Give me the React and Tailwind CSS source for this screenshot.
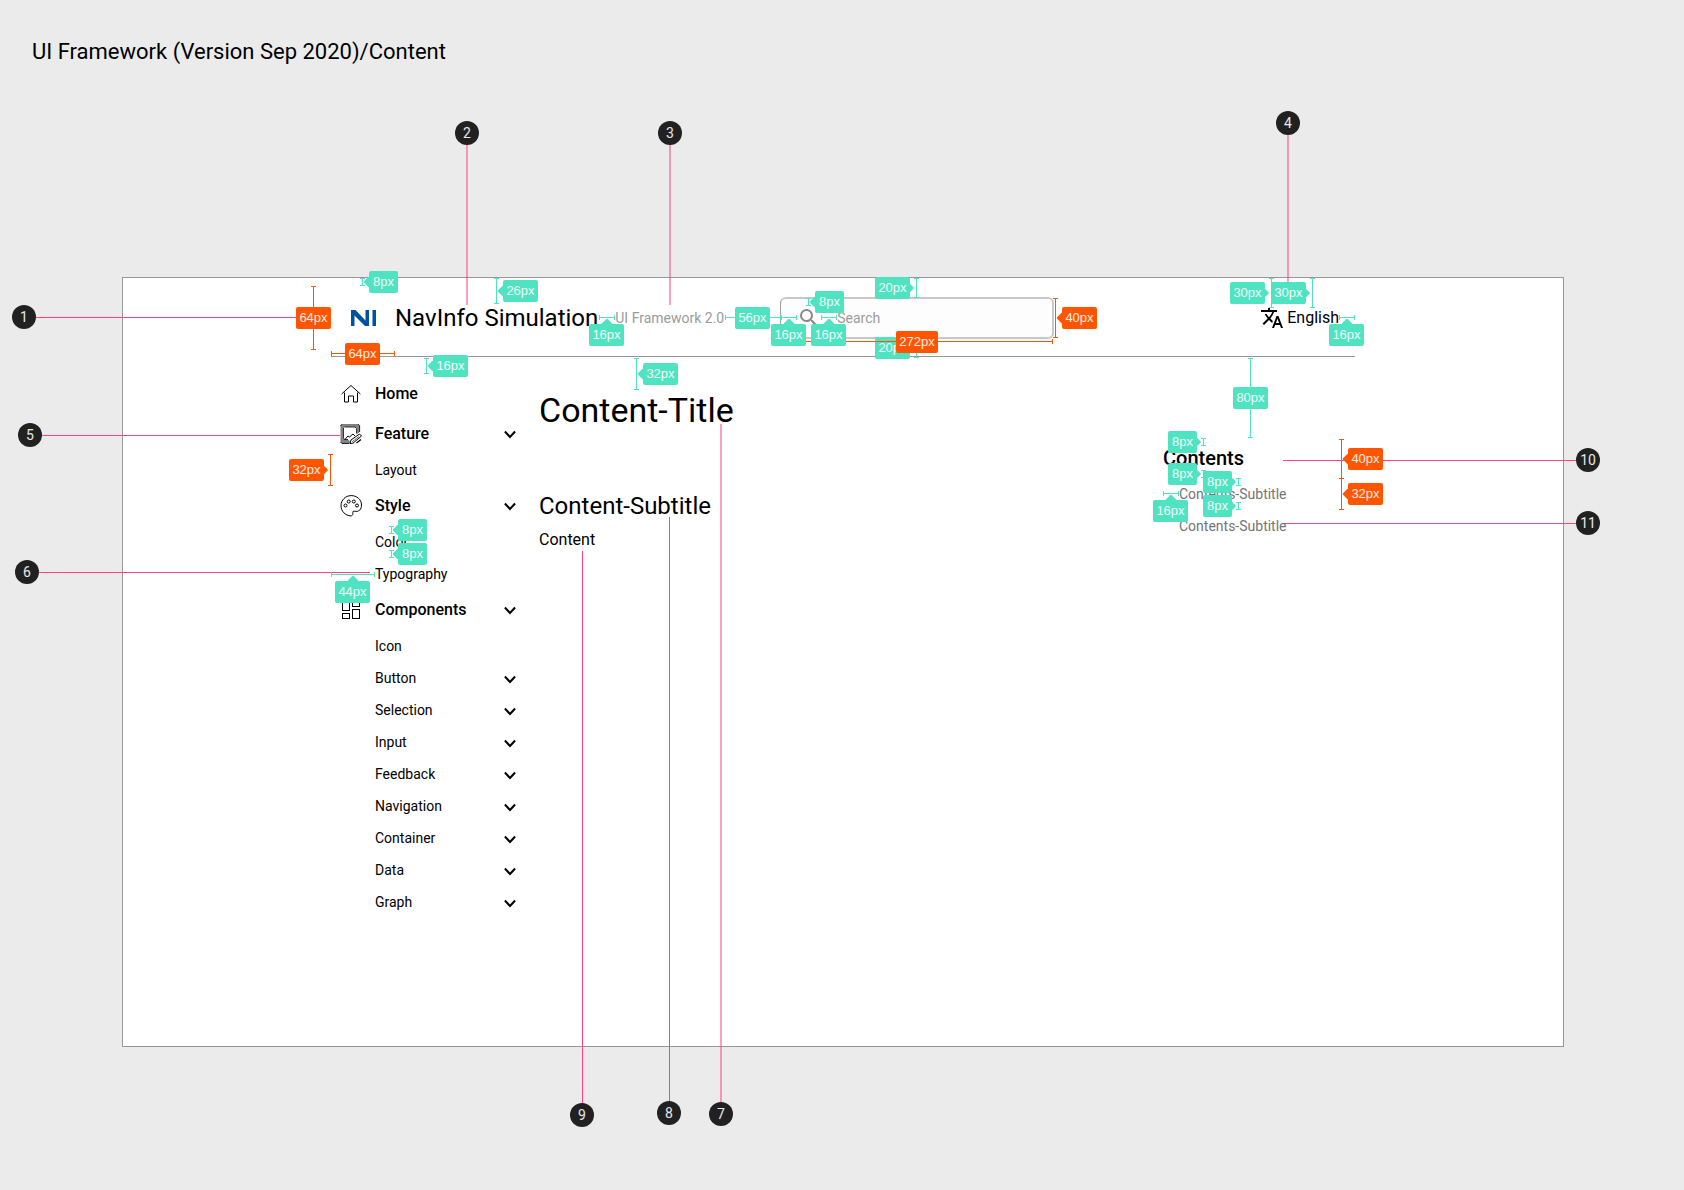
import React from "react";
import { MdSearch, MdTranslate } from "react-icons/md";

const TEAL = "#50e3c2";
const ORANGE = "#ff5500";

/* ---------- icons ---------- */

function HomeIcon() {
  return (
    <svg viewBox="0 0 24 24" className="size-6 shrink-0" fill="none" stroke="#000" strokeWidth="1" aria-hidden="true">
      <path d="M2.6 12 12 3.500l9.400 8.500" />
      <path d="M5.500 10.500v9.500h4v-6h5v6h4v-9.500" />
    </svg>
  );
}

function FeatureIcon() {
  return (
    <svg viewBox="0 0 24 24" className="size-6 shrink-0" fill="none" aria-hidden="true">
      <path
        d="M3 2h16l1.600 1.400V10L18 12V6.500L16.500 5h-11L4 6.500V16.500L6 18h4l1.500 3.500H3L1.500 20V3.500z"
        fill="#808080"
      />
      <path d="M5.500 5h10.500l1.500 1.500v5M4.500 6v10.500l1.500 1h3" stroke="#333" strokeWidth="1" />
      <path d="M1.500 20 3 21.500h7M1.500 4 3 2.200M19 2.200l1.600 1.300V10" stroke="#222" strokeWidth="1" />
      <path d="m5.500 18 3.500-4 1.500 1 3.500-3 2 2" stroke="#000" strokeWidth="1" />
      <path d="m11 21.500 1-3.500 8.500-6 2 2-8.500 7.200z" fill="#fff" stroke="#000" strokeWidth="1" />
      <path d="m17.500 21 4.500-3.500" stroke="#000" strokeWidth="1.200" />
      <path d="m13.500 19.500 6.500-5" stroke="#000" strokeWidth="1" strokeDasharray="1.500 1" />
    </svg>
  );
}

function StyleIcon() {
  return (
    <svg viewBox="0 0.5 24 24" className="size-6 shrink-0" fill="none" stroke="#000" strokeWidth="1" aria-hidden="true">
      <path d="M14.200 17.800c-.8.5-.2 1.400-.3 2.300-.1 1.300-.9 2.300-2 2.300C6.300 22.200 2 17.700 2 12.200 2 6.500 6.600 2.100 12.200 2.100S22.500 6 22.500 11.500c0 4.600-2.600 6.400-5.300 6.400-1.200 0-2.200-.5-3-.1z" />
      <circle cx="6.500" cy="12" r="1.500" />
      <circle cx="9.700" cy="8" r="1.500" />
      <circle cx="14.800" cy="8" r="1.500" />
      <circle cx="18" cy="12" r="1.500" />
    </svg>
  );
}

function ComponentsIcon() {
  return (
    <svg viewBox="0 0 24 24" className="size-6 shrink-0" fill="none" stroke="#000" strokeWidth="1" aria-hidden="true">
      <rect x="3.500" y="3.500" width="7" height="9" />
      <rect x="13.500" y="3.500" width="7" height="5" />
      <rect x="3.500" y="15.500" width="7" height="5" />
      <rect x="13.500" y="11.500" width="7" height="9" />
    </svg>
  );
}

function Chevron({ raised }) {
  return (
    <svg
      viewBox={raised ? "0 1 24 24" : "0 0 24 24"}
      className="size-6 shrink-0"
      fill="none"
      stroke="#000"
      strokeWidth="2"
      aria-hidden="true"
    >
      <path d="m6.900 10.500 5.100 5.500 5.100-5.500" />
    </svg>
  );
}

function Logo() {
  return (
    <svg viewBox="0 0 64 64" className="size-16 shrink-0" role="img" aria-label="NavInfo">
      <path d="M20 40V24h4.500l10 10.500V24H38v16h-4l-10.500-10.500V40zM41.500 24h3.500v16h-3.500z" fill="#0052a0" />
    </svg>
  );
}

/* ---------- page ---------- */

const MENU = [
  { label: "Home", icon: HomeIcon },
  { label: "Feature", icon: FeatureIcon, open: true },
  { label: "Layout" },
  { label: "Style", icon: StyleIcon, open: true },
  { label: "Color" },
  { label: "Typography" },
  { label: "Components", icon: ComponentsIcon, open: true },
  { label: "Icon" },
  { label: "Button", open: false },
  { label: "Selection", open: false },
  { label: "Input", open: false },
  { label: "Feedback", open: false },
  { label: "Navigation", open: false },
  { label: "Container", open: false },
  { label: "Data", open: false },
  { label: "Graph", open: false },
];

function MenuItem({ label, icon: Icon, open }) {
  const row = Icon
    ? "flex h-10 w-full items-center pl-2 pr-[17px] text-base font-medium text-left"
    : "flex h-8 w-full items-center pl-2 pr-[17px] text-sm text-left";
  const inner = (
    <>
      {Icon ? <Icon /> : <span className="w-6" />}
      <span className="ml-3 grow">{label}</span>
    </>
  );
  if (open === undefined) {
    return (
      <a href="#" className={row}>
        {inner}
      </a>
    );
  }
  return (
    <button type="button" aria-expanded={open} className={row}>
      {inner}
      <Chevron raised={Boolean(Icon)} />
    </button>
  );
}

function Header() {
  return (
    <header className="flex h-[79px] items-center border-b border-[#979797] pt-0.5 pr-4">
      <Logo />
      <span className="text-2xl whitespace-nowrap">NavInfo Simulation</span>
      <span className="ml-[17px] text-sm whitespace-nowrap text-[#9b9b9b]">UI Framework 2.0</span>
      <label className="ml-14 flex h-[42px] w-[274px] shrink-0 items-center rounded-md border-2 border-l border-[#c8c8c8] border-l-[#a0a0a0] bg-[#fdfdfd] pl-4">
        <MdSearch className="size-6 shrink-0 text-[#888888]" aria-hidden="true" />
        <input
          type="search"
          aria-label="Search"
          placeholder="Search"
          className="ml-4 w-full min-w-0 bg-transparent text-sm outline-none placeholder:text-[#9b9b9b]"
        />
      </label>
      <button type="button" className="ml-auto flex items-center gap-[3px] text-base">
        <MdTranslate className="size-6" aria-hidden="true" />
        English
      </button>
    </header>
  );
}

/* ---------- measurements ---------- */

/* v: [x, y1, y2] vertical span; h: [y, x1, x2] horizontal span */
const MEASURES = [
  { t: "64px", x: 296, y: 307, v: [313, 286, 350], c: ORANGE },
  { t: "8px", x: 369, y: 271, v: [362, 278, 286], a: "left" },
  { t: "26px", x: 503, y: 280, v: [496, 278, 304], a: "left" },
  { t: "64px", x: 345, y: 343, h: [353, 331, 395], c: ORANGE },
  { t: "16px", x: 433, y: 355, v: [426, 358, 374], a: "left" },
  { t: "32px", x: 289, y: 459, v: [330, 454, 486], a: "right", c: ORANGE },
  { t: "16px", x: 589, y: 324, h: [317, 599, 615], a: "up" },
  { t: "56px", x: 735, y: 307, h: [317, 725, 781] },
  { t: "20px", x: 875, y: 277, v: [916, 278, 298], a: "right" },
  { t: "20px", x: 875, y: 337, v: [916, 338, 358], a: "right" },
  { t: "272px", x: 896, y: 331, h: [341, 781, 1053], c: ORANGE },
  { t: "16px", x: 771, y: 324, h: [317, 781, 797], a: "up" },
  { t: "16px", x: 811, y: 324, h: [317, 821, 837], a: "up" },
  { t: "8px", x: 815, y: 291, v: [808, 298, 306], a: "left" },
  { t: "32px", x: 643, y: 363, v: [636, 358, 390], a: "left" },
  { t: "40px", x: 1062, y: 307, v: [1055, 298, 338], a: "left", c: ORANGE },
  { t: "30px", x: 1230, y: 282, v: [1271, 278, 308], a: "right" },
  { t: "30px", x: 1271, y: 282, v: [1312, 278, 308], a: "right" },
  { t: "16px", x: 1329, y: 324, h: [317, 1339, 1355], a: "up" },
  { t: "80px", x: 1233, y: 387, v: [1250, 358, 438] },
  { t: "8px", x: 1168, y: 431, v: [1203, 438, 446], a: "right" },
  { t: "8px", x: 1168, y: 463, v: [1203, 470, 478], a: "right" },
  { t: "8px", x: 1203, y: 471, v: [1238, 478, 486], a: "right" },
  { t: "8px", x: 1203, y: 495, v: [1238, 502, 510], a: "right" },
  { t: "16px", x: 1153, y: 500, h: [493, 1163, 1179], a: "up" },
  { t: "40px", x: 1348, y: 448, v: [1341, 439, 479], a: "left", c: ORANGE },
  { t: "32px", x: 1348, y: 483, v: [1341, 478, 510], a: "left", c: ORANGE },
  { t: "8px", x: 398, y: 519, v: [391, 526, 534], a: "left" },
  { t: "8px", x: 398, y: 543, v: [391, 550, 558], a: "left" },
  { t: "44px", x: 335, y: 581, h: [574, 331, 375], a: "up" },
];

const TAG_WIDTH = { 3: "w-[29px]", 4: "w-[35px]", 5: "w-[42px]" };

const ARROW = {
  left: "absolute top-[7px] -left-1 size-2 rotate-45 rounded-[1px]",
  right: "absolute top-[7px] -right-[3px] size-[6px] mt-px rotate-45 rounded-[1px]",
  up: "absolute -top-1 left-[14px] size-2 rotate-45 rounded-[1px]",
};

function Measure({ t, x, y, v, h, a, c = TEAL }) {
  const span = v
    ? { left: v[0] - 2, top: v[1], width: 5, height: v[2] - v[1] }
    : { left: h[1], top: h[0] - 2, width: h[2] - h[1], height: 5 };
  return (
    <>
      <div
        className={
          v
            ? "absolute flex justify-center border-y border-current"
            : "absolute flex items-center border-x border-current"
        }
        style={{ ...span, color: c }}
      >
        <i className={v ? "h-full w-px bg-current" : "h-px w-full bg-current"} />
      </div>
      <div
        className={`absolute flex h-[22px] items-center justify-center rounded-xs font-['Liberation_Sans',sans-serif] text-[13px] leading-4 ${TAG_WIDTH[t.length]}`}
        style={{ left: x, top: y, backgroundColor: c }}
      >
        {a && <i className={ARROW[a]} style={{ backgroundColor: c }} />}
        <span className="relative text-white/90">{t}</span>
      </div>
    </>
  );
}

/* line: [left, top, width, height]; soft lines straddle two pixels */
const PINS = [
  { n: 1, x: 24, y: 317, line: [36, 317, 260, 1] },
  { n: 2, x: 467, y: 133, line: [466, 145, 2, 160], soft: true },
  { n: 3, x: 670, y: 133, line: [669, 145, 2, 160], soft: true },
  { n: 4, x: 1288, y: 123, line: [1287, 135, 2, 148], soft: true },
  { n: 5, x: 30, y: 435, line: [42, 435, 298, 1] },
  { n: 6, x: 27, y: 572, line: [39, 572, 331, 1] },
  { n: 7, x: 721, y: 1114, line: [720, 424, 2, 678], soft: true },
  { n: 8, x: 669, y: 1113, line: [669, 517, 1, 584] },
  { n: 9, x: 582, y: 1115, line: [582, 551, 1, 552] },
  { n: 10, x: 1588, y: 460, line: [1283, 460, 293, 1] },
  { n: 11, x: 1588, y: 523, line: [1284, 523, 292, 1] },
];

function PinLine({ line: [left, top, width, height], soft }) {
  return (
    <i
      className={soft ? "absolute bg-[#ff4081]/50" : "absolute bg-[#ff4081]"}
      style={{ left, top, width, height }}
    />
  );
}

function Pin({ n, x, y }) {
  return (
    <span
      className="absolute flex size-6 items-center justify-center rounded-full bg-[#212121] text-sm text-white/90"
      style={{ left: x - 12, top: y - 12 }}
    >
      {n}
    </span>
  );
}

/* Overlay whose origin is the board's top-left corner. */
function Annotations() {
  return (
    <div className="pointer-events-none absolute -top-[278px] -left-[331px]">
      {PINS.map((p) => (
        <PinLine key={p.n} {...p} />
      ))}
      {MEASURES.map((m, i) => (
        <Measure key={i} {...m} />
      ))}
      {PINS.map((p) => (
        <Pin key={p.n} {...p} />
      ))}
    </div>
  );
}

export default function App() {
  return (
    <div className="min-h-screen overflow-hidden bg-[#ebebeb] pr-[120px] pb-[143px] pl-[122px] font-['Roboto',sans-serif] text-black">
      <h1 className="-ml-[90px] pt-9 text-[22px] leading-8 whitespace-nowrap">UI Framework (Version Sep 2020)/Content</h1>
      <div className="mt-[209px] min-h-[770px] border border-[#979797] bg-white">
        <div className="relative mx-auto max-w-5xl">
          <Header />
          <div className="flex pt-px">
            <nav className="w-52 shrink-0 pt-4" aria-label="Main">
              {MENU.map((m) => (
                <MenuItem key={m.label} {...m} />
              ))}
            </nav>
            <main className="grow pt-8">
              <h2 className="text-[34px] leading-10">Content-Title</h2>
              <h3 className="mt-[60px] text-2xl">Content-Subtitle</h3>
              <p className="mt-1.5 text-base">Content</p>
            </main>
            <aside className="w-48 shrink-0 pt-20">
              <h4 className="text-xl leading-10 font-medium">Contents</h4>
              <ul className="pl-4 text-sm leading-8 text-[#757575]">
                <li className="h-8">
                  <a href="#">Contents-Subtitle</a>
                </li>
                <li className="h-8">
                  <a href="#">Contents-Subtitle</a>
                </li>
              </ul>
            </aside>
          </div>
          <Annotations />
        </div>
      </div>
    </div>
  );
}
